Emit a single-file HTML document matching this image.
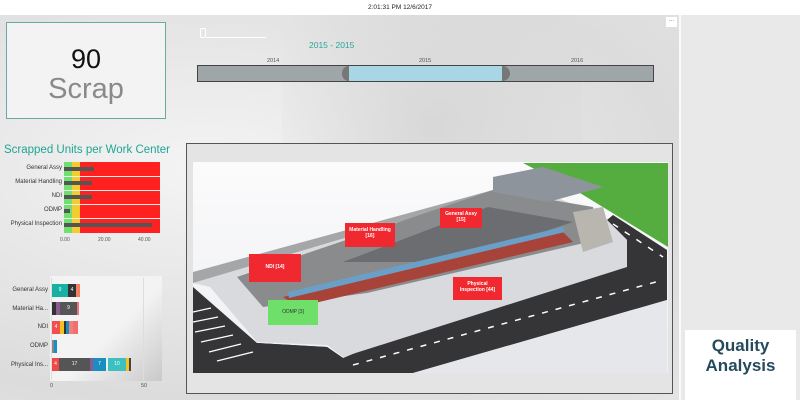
<!DOCTYPE html>
<html><head><meta charset="utf-8"><style>
*{margin:0;padding:0;box-sizing:border-box}
body{width:800px;height:400px;overflow:hidden;background:#fff;font-family:"Liberation Sans",sans-serif;position:relative}
.a{position:absolute}
.lbl{font-size:6px;color:#333;text-align:right;width:62px;left:0}
.t{font-size:5.5px;color:#555}
</style></head><body>
<div class="a" style="left:0;top:0;width:800px;height:15px;background:#fff"></div>
<div class="a" style="left:0;top:4px;width:800px;text-align:center;font-size:6.5px;color:#222">2:01:31 PM 12/6/2017</div>
<div class="a" style="left:0;top:15px;width:679px;height:385px;background:radial-gradient(ellipse at 30% 40%,#f4f4f4,#dcdcdc 70%,#e4e4e4)"></div>
<div class="a" style="left:282px;top:15px;width:300px;height:380px;background:radial-gradient(circle at 50% 30%,rgba(200,200,200,.5),rgba(255,255,255,0) 60%)"></div>
<div class="a" style="left:679px;top:15px;width:121px;height:385px;background:#e9e9e9;border-left:2px solid #fafafa"></div>
<div class="a" style="left:666px;top:17px;width:11px;height:10px;background:#fff;font-size:6px;color:#666;text-align:center;line-height:6px">...</div>

<div class="a" style="left:6px;top:22px;width:160px;height:97px;border:1px solid #6aa9a2;background:#f3f3f3"></div>
<div class="a" style="left:6px;top:44px;width:160px;text-align:center;font-size:27px;color:#111">90</div>
<div class="a" style="left:6px;top:73px;width:160px;text-align:center;font-size:29px;color:#8a8a8a">Scrap</div>

<div class="a" style="left:200px;top:28px;width:6px;height:10px;border:1px solid #fff;border-radius:2px"></div>
<div class="a" style="left:206px;top:37px;width:60px;height:1px;background:#fff"></div>
<div class="a" style="left:309px;top:40px;font-size:8.5px;color:#2aa59a">2015 - 2015</div>
<div class="a t" style="left:267px;top:58px">2014</div>
<div class="a t" style="left:419px;top:58px">2015</div>
<div class="a t" style="left:571px;top:58px">2016</div>
<div class="a" style="left:197px;top:65px;width:457px;height:17px;border:1px solid #444;background:#9fa6a8"></div>
<div class="a" style="left:349px;top:66px;width:153px;height:15px;background:#a9d6e5"></div>
<div class="a" style="left:342px;top:66px;width:14px;height:15px;border-radius:7px 0 0 7px;background:#777;clip-path:inset(0 7px 0 0)"></div>
<div class="a" style="left:502px;top:66px;width:8px;height:15px;border-radius:0 8px 8px 0;background:#777"></div>

<div class="a" style="left:4px;top:144px;font-size:11.5px;color:#1fa595">Scrapped Units per Work Center</div>
<div class="a" style="left:64px;top:162px;width:96px;height:71px;background:#ff2020"></div>
<div class="a" style="left:64px;top:162px;width:8px;height:71px;background:#6fe070"></div>
<div class="a" style="left:72px;top:162px;width:8px;height:71px;background:#f5cc2f"></div>
<div class="a" style="left:64px;top:176px;width:96px;height:1px;background:#eee"></div>
<div class="a" style="left:64px;top:190px;width:96px;height:1px;background:#eee"></div>
<div class="a" style="left:64px;top:204px;width:96px;height:1px;background:#eee"></div>
<div class="a" style="left:64px;top:218px;width:96px;height:1px;background:#eee"></div>
<div class="a" style="left:64px;top:167px;width:30px;height:4px;background:#555"></div>
<div class="a" style="left:64px;top:181px;width:28px;height:4px;background:#555"></div>
<div class="a" style="left:64px;top:195px;width:28px;height:4px;background:#555"></div>
<div class="a" style="left:64px;top:209px;width:6px;height:4px;background:#555"></div>
<div class="a" style="left:64px;top:223px;width:88px;height:4px;background:#555"></div>
<div class="a lbl" style="top:165px">General Assy</div>
<div class="a lbl" style="top:179px">Material Handling</div>
<div class="a lbl" style="top:193px">NDI</div>
<div class="a lbl" style="top:207px">ODMP</div>
<div class="a lbl" style="top:221px">Physical Inspection</div>
<div class="a t" style="left:60px;top:237px;font-size:5px">0.00</div>
<div class="a t" style="left:98px;top:237px;font-size:5px">20.00</div>
<div class="a t" style="left:138px;top:237px;font-size:5px">40.00</div>

<div class="a" style="left:50px;top:276px;width:112px;height:105px;background:linear-gradient(135deg,#f3f3f3 55%,#c9c9c9)"></div>
<div class="a" style="left:51px;top:278px;width:1px;height:102px;background:#ddd"></div>
<div class="a" style="left:143px;top:278px;width:1px;height:102px;background:#ddd"></div>
<div class="a lbl" style="left:-14px;top:287px">General Assy</div>
<div class="a lbl" style="left:-14px;top:306px">Material Ha...</div>
<div class="a lbl" style="left:-14px;top:324px">NDI</div>
<div class="a lbl" style="left:-14px;top:343px">ODMP</div>
<div class="a lbl" style="left:-14px;top:362px">Physical Ins...</div>
<div class="a" style="left:52px;top:284px;height:13px;display:flex;font-size:5px;color:#fff;line-height:13px;text-align:center">
<div style="width:16px;background:#17b1a4">9</div><div style="width:8px;background:#333">4</div><div style="width:4px;background:#f08060"></div></div>
<div class="a" style="left:52px;top:302px;height:13px;display:flex;font-size:5px;color:#fff;line-height:13px;text-align:center">
<div style="width:4px;background:#333"></div><div style="width:4px;background:#8a5a90"></div><div style="width:17px;background:#555">9</div><div style="width:2px;background:#f07080"></div></div>
<div class="a" style="left:52px;top:321px;height:13px;display:flex;font-size:5px;color:#fff;line-height:13px;text-align:center">
<div style="width:8px;background:#f05050">4</div><div style="width:4px;background:#f5c020"></div><div style="width:2px;background:#333"></div><div style="width:3px;background:#1a8ec0"></div><div style="width:4px;background:#f08080"></div><div style="width:5px;background:#f07070"></div></div>
<div class="a" style="left:52px;top:340px;height:13px;display:flex"><div style="width:2px;background:#888"></div><div style="width:3px;background:#1a8ec0"></div></div>
<div class="a" style="left:52px;top:358px;height:13px;display:flex;font-size:5px;color:#fff;line-height:13px;text-align:center">
<div style="width:7px;background:#f04848">4</div><div style="width:31px;background:#555">17</div><div style="width:3px;background:#8a5a90"></div><div style="width:13px;background:#1a8ec0">7</div><div style="width:2px;background:#eee"></div><div style="width:18px;background:#3cc0c0">10</div><div style="width:3px;background:#f5c020"></div><div style="width:2px;background:#444"></div></div>
<div class="a t" style="left:50px;top:383px;font-size:5.5px">0</div>
<div class="a t" style="left:141px;top:383px;font-size:5.5px">50</div>

<div class="a" style="left:186px;top:143px;width:487px;height:251px;border:1px solid #555;background:#e4e4e4"></div>
<svg class="a" style="left:193px;top:162px" width="475" height="211" viewBox="0 0 475 211">
<defs><linearGradient id="sky" x1="0" y1="0" x2="0" y2="1"><stop offset="0" stop-color="#fbfbfc"/><stop offset="1" stop-color="#eeeff1"/></linearGradient></defs>
<rect width="475" height="211" fill="url(#sky)"/>
<polygon points="330,1 475,1 475,85 387,31" fill="#56ad3f"/>
<polygon points="0,125 64,181 134,185 150,196 434,78 414,58 420,53 474,88 474,138 220,211 0,211" fill="#353537"/>
<polygon points="474,138 474,211 220,211" fill="#e6e7ea"/>
<polygon points="0,190 64,181 134,185 150,196 130,211 0,211" fill="#353537"/>
<polygon points="0,121 17,125 64,180 134,183 150,195 434,105 434,78 414,58 330,20 280,38" fill="#d9dadd"/>
<polygon points="0,121 280,38 330,20 300,28 0,110" fill="#a5a6a8"/>
<polygon points="44,115 300,28 400,45 404,78 174,131 70,145" fill="#8a8b8d"/>
<polygon points="150,100 295,45 380,60 260,100" fill="#6c6d70"/>
<polygon points="90,135 370,70 380,80 105,145" fill="#a8433a"/>
<polygon points="95,130 370,65 372,70 96,136" fill="#6aa0c8"/>
<polygon points="300,15 350,5 410,25 355,40 300,30" fill="#8d949c"/>
<polygon points="380,50 410,45 420,80 390,90" fill="#b9b6b0"/>
<g stroke="#fff" stroke-width="1.5" stroke-dasharray="6 8">
<line x1="160" y1="203" x2="470" y2="118"/>
<line x1="420" y1="62" x2="470" y2="95"/>
</g>
<g stroke="#fff" stroke-width="1.2">
<line x1="0" y1="150" x2="18" y2="146"/><line x1="0" y1="160" x2="25" y2="155"/><line x1="2" y1="170" x2="32" y2="164"/><line x1="8" y1="180" x2="40" y2="173"/><line x1="16" y1="190" x2="48" y2="182"/><line x1="24" y1="199" x2="60" y2="190"/>
</g>
</svg>
<div class="a" style="left:440px;top:208px;width:42px;height:20px;background:#f02830;color:#fff;font-size:5px;font-weight:bold;text-align:center;padding-top:3px">General Assy<br>[15]</div>
<div class="a" style="left:345px;top:223px;width:50px;height:24px;background:#f02830;color:#fff;font-size:5px;font-weight:bold;text-align:center;padding-top:4px">Material Handling<br>[16]</div>
<div class="a" style="left:249px;top:254px;width:52px;height:28px;background:#f02830;color:#fff;font-size:5px;font-weight:bold;text-align:center;padding-top:10px">NDI [14]</div>
<div class="a" style="left:453px;top:277px;width:49px;height:23px;background:#f02830;color:#fff;font-size:5px;font-weight:bold;text-align:center;padding-top:4px">Physical<br>Inspection [44]</div>
<div class="a" style="left:268px;top:300px;width:50px;height:25px;background:#6ee06a;color:#333;font-size:5px;text-align:center;padding-top:9px">ODMP [3]</div>

<div class="a" style="left:685px;top:330px;width:111px;height:70px;background:#fff"></div>
<div class="a" style="left:685px;top:336px;width:111px;text-align:center;font-size:17px;font-weight:bold;color:#26495e;line-height:20px">Quality<br>Analysis</div>
</body></html>
